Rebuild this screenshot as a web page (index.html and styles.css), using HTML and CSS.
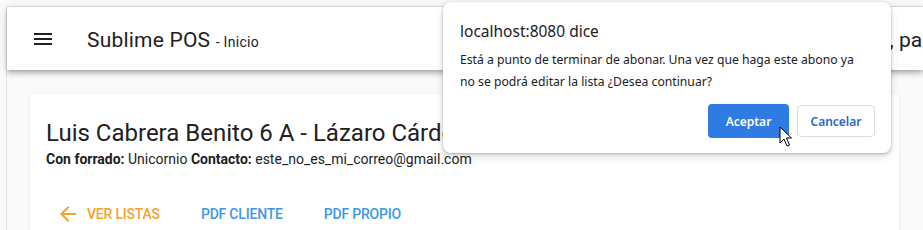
FILE: index.html
```html
<!DOCTYPE html>
<html lang="es">
<head>
<meta charset="utf-8">
<title>Sublime POS - Inicio</title>
<link rel="stylesheet" href="styles.css">
</head>
<body>
<div class="frame">
  <header class="appbar">
    <button class="menu-btn" aria-label="Menú">
      <svg width="24" height="24" viewBox="0 0 24 24"><path d="M3 18h18v-2H3v2zm0-5h18v-2H3v2zm0-7v2h18V6H3z" fill="#212121"/></svg>
    </button>
    <div class="title">Sublime POS <span class="sub">- Inicio</span></div>
    <div class="user">Hola, papelería</div>
  </header>
  <main class="main">
    <section class="card">
      <h1 class="card-title">Luis Cabrera Benito 6 A - Lázaro Cárdenas</h1>
      <p class="card-sub"><b>Con forrado:</b> Unicornio <b>Contacto:</b> este_no_es_mi_correo@gmail.com</p>
      <div class="actions">
        <button class="tbtn orange">
          <svg width="24" height="24" viewBox="0 0 24 24"><path d="M20 11H7.83l5.59-5.59L12 4l-8 8 8 8 1.41-1.41L7.83 13H20v-2z" fill="currentColor"/></svg>
          <span>Ver listas</span>
        </button>
        <button class="tbtn blue"><span>PDF cliente</span></button>
        <button class="tbtn blue"><span>PDF propio</span></button>
      </div>
    </section>
  </main>
</div>

<div class="dialog" role="alertdialog">
  <div class="dlg-title">localhost:8080 dice</div>
  <div class="dlg-msg">Está a punto de terminar de abonar. Una vez que haga este abono ya no se podrá editar la lista ¿Desea continuar?</div>
  <div class="dlg-buttons">
    <button class="dbtn primary">Aceptar</button>
    <button class="dbtn secondary">Cancelar</button>
  </div>
  <svg class="cursor" width="14" height="22" viewBox="0 0 14 22"><path d="M1 1 L1 17 L5 13 L8 20 L10.5 19 L7.5 12 L12.5 12 Z" fill="#fff" stroke="#000" stroke-width="1" stroke-linejoin="round"/></svg>
</div>
</body>
</html>
```

FILE: styles.css
```css
html, body {
  margin: 0;
  padding: 0;
  background: #fafafa;
  height: 100%;
  overflow: hidden;
}
body {
  font-family: Roboto, "Noto Sans", Arial, sans-serif;
  color: #212121;
}
.frame {
  margin-top: 6px;
  margin-left: 6px;
  border-top: 1px solid #e2e2e2;
  border-left: 1px solid #e2e2e2;
  background: #fafafa;
  height: 300px;
}
.appbar {
  height: 63px;
  background: #fff;
  display: flex;
  align-items: center;
  padding-left: 24px;
  box-shadow: 0 2px 4px -1px rgba(0,0,0,.2), 0 4px 5px 0 rgba(0,0,0,.14), 0 1px 10px 0 rgba(0,0,0,.12);
  overflow: hidden;
  position: relative;
  z-index: 1;
}
.menu-btn {
  border: 0;
  background: none;
  padding: 0;
  width: 24px;
  height: 24px;
  display: flex;
}
.title {
  margin-left: 32px;
  margin-top: 2px;
  font-size: 21px;
  font-weight: 400;
  letter-spacing: .01em;
  white-space: nowrap;
  color: #212121;
}
.title .sub {
  font-size: 14px;
  font-weight: 400;
  letter-spacing: .02em;
}
.user {
  margin-left: auto;
  margin-right: -62px;
  margin-top: 2px;
  font-size: 21px;
  font-weight: 400;
  white-space: nowrap;
}
.main {
  padding: 24px 24px 0 23px;
}
.card {
  background: #fff;
  box-shadow: 0 1px 3px 0 rgba(0,0,0,.1), 0 1px 1px 0 rgba(0,0,0,.06);
  border-radius: 4px;
  padding-top: 23px;
  height: 200px;
}
.card-title {
  margin: 0;
  padding: 0 16px;
  font-size: 24px;
  font-weight: 400;
  line-height: 32px;
  color: #212121;
  white-space: nowrap;
}
.card-sub {
  margin: 0;
  padding: 0 16px;
  font-size: 14px;
  line-height: 20px;
  color: #212121;
}
.card-sub b {
  font-weight: 700;
}
.actions {
  display: flex;
  gap: 9px;
  padding-left: 10px;
  margin-top: 27px;
}
.tbtn {
  height: 36px;
  border: 0;
  background: none;
  padding: 0 16px;
  display: flex;
  align-items: center;
  font-family: Roboto, sans-serif;
  font-size: 14px;
  font-weight: 500;
  text-transform: uppercase;
  letter-spacing: -0.2px;
}
.tbtn svg {
  margin-right: 7px;
}
.orange { color: #f6a22e; }
.blue { color: #3d98e4; }

.dialog {
  position: absolute;
  left: 443px;
  top: 2px;
  width: 448px;
  box-sizing: border-box;
  padding: 18px 16px 15px 17px;
  background: #fff;
  border-radius: 8px;
  box-shadow: 0 1px 3px rgba(0,0,0,.25), 0 4px 10px rgba(0,0,0,.12);
  font-family: "Noto Sans", "Open Sans", sans-serif;
  z-index: 10;
}
.dlg-title {
  font-size: 15.5px;
  line-height: 22px;
  color: #202124;
}
.dlg-msg {
  margin-top: 7px;
  font-size: 12.2px;
  line-height: 22px;
  color: #202124;
  padding-right: 14px;
}
.dlg-buttons {
  display: flex;
  justify-content: flex-end;
  align-items: center;
  gap: 8px;
  margin-top: 11px;
}
.dbtn {
  font-family: "Noto Sans", "Open Sans", sans-serif;
  font-size: 12px;
  font-weight: 600;
  border-radius: 4px;
  box-sizing: border-box;
}
.primary {
  width: 81px;
  height: 34px;
  background: #2f7be3;
  color: #fff;
  border: 0;
}
.secondary {
  width: 78px;
  height: 32px;
  background: #fff;
  color: #2a66c8;
  border: 1px solid #dadce0;
}
.cursor {
  position: absolute;
  left: 336px;
  top: 124px;
}
```
